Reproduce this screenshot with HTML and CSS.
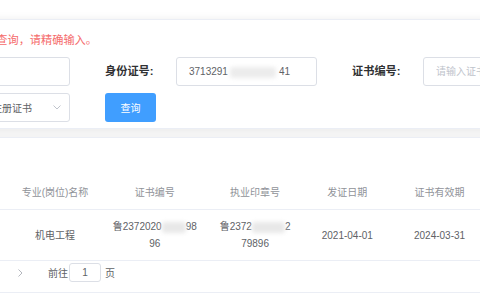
FILE: index.html
```html
<!DOCTYPE html>
<html lang="zh-CN">
<head>
    <meta charset="UTF-8">
    <meta name="viewport" content="width=device-width, initial-scale=1.0">
    <title>注册证书查询</title>
    <link rel="stylesheet" href="styles.css">
</head>
<body>

    <div class="page">
        <div class="card search-card">
            <p class="tip">温馨提示：系统仅支持精确查询，请精确输入。</p>

            <div class="form-row">
                <div class="field">
                    <label class="field-label" for="xm">姓名:</label>
                    <input class="field-input" type="text" id="xm" name="xm">
                </div>
                <div class="field">
                    <label class="field-label">身份证号:</label>
                    <div class="field-input fake-input">3713291<span class="masked masked-id"></span>41</div>
                </div>
                <div class="field">
                    <label class="field-label" for="zsbh">证书编号:</label>
                    <input class="field-input" type="text" id="zsbh" name="zsbh" placeholder="请输入证书编号">
                </div>
            </div>

            <div class="form-row">
                <div class="field">
                    <label class="field-label">证书类型:</label>
                    <div class="field-input select">
                        <span>一级建造师注册证书</span>
                        <svg class="select-arrow" width="8" height="5" viewBox="0 0 8 5">
                            <path d="M0.5 0.5 L4 4 L7.5 0.5" fill="none" stroke="#c0c4cc" stroke-width="1"/>
                        </svg>
                    </div>
                </div>
                <button class="btn-primary" type="button">查询</button>
            </div>
        </div>

        <div class="card result-card">
            <table class="result-table">
                <colgroup>
                    <col style="width: 60px">
                    <col style="width: 86px">
                    <col style="width: 101px">
                    <col style="width: 98px">
                    <col style="width: 102px">
                    <col style="width: 82px">
                    <col style="width: 102px">
                    <col style="width: 90px">
                </colgroup>
                <thead>
                    <tr>
                        <th>序号</th>
                        <th>姓名</th>
                        <th>专业(岗位)名称</th>
                        <th>证书编号</th>
                        <th>执业印章号</th>
                        <th>发证日期</th>
                        <th>证书有效期</th>
                        <th>状态</th>
                    </tr>
                </thead>
                <tbody>
                    <tr>
                        <td>1</td>
                        <td>张**</td>
                        <td>机电工程</td>
                        <td>鲁2372020<span class="masked masked-cert"></span>98<br>96</td>
                        <td>鲁2372<span class="masked masked-seal"></span>2<br>79896</td>
                        <td>2021-04-01</td>
                        <td>2024-03-31</td>
                        <td>有效</td>
                    </tr>
                </tbody>
            </table>

            <div class="pager">
                <div class="pager-left">
                    <span class="pager-total">共 1 条</span>
                    <span class="pager-btn">
                        <svg width="5" height="8" viewBox="0 0 5 8"><path d="M4.5 0.5 L1 4 L4.5 7.5" fill="none" stroke="#c0c4cc" stroke-width="1"/></svg>
                    </span>
                    <span class="pager-num">1</span>
                </div>
                <span class="pager-btn">
                    <svg width="5" height="8" viewBox="0 0 5 8"><path d="M0.5 0.5 L4 4 L0.5 7.5" fill="none" stroke="#b4b7be" stroke-width="1"/></svg>
                </span>
                <span class="pager-jump">前往<input class="pager-input" type="text" value="1">页</span>
            </div>
        </div>
    </div>

</body>
</html>
```

FILE: styles.css
```css
* {
    margin: 0;
    padding: 0;
    box-sizing: border-box;
}
html, body {
    overflow: hidden;
}
body {
    font-family: 'Liberation Sans', 'Noto Sans CJK SC', sans-serif;
    background-color: #fff;
    color: #606266;
}
.page {
    width: 760px;
    margin: 19px 0 0 -160px;
}
.card {
    background-color: #fff;
    border: 1px solid #ebeef5;
    box-shadow: 0 2px 10px rgba(0, 0, 0, 0.1);
}
.search-card {
    padding: 12px 17px 6px;
    margin-bottom: 8px;
}
.tip {
    padding-left: 4px;
    font-size: 11.2px;
    line-height: 16px;
    color: #f56c6c;
    margin-bottom: 9px;
}
.form-row {
    display: flex;
    align-items: center;
    margin-bottom: 7px;
}
.form-row:last-child {
    margin-bottom: 0;
}
.field {
    display: flex;
    align-items: center;
    margin-right: 35px;
}
.field-label {
    width: 71px;
    font-size: 11.2px;
    font-weight: bold;
    color: #303133;
    line-height: 29px;
}
.field-input {
    width: 141px;
    height: 29px;
    padding: 0 12px;
    font-family: inherit;
    font-size: 10px;
    color: #606266;
    background-color: #fff;
    border: 1px solid #dcdfe6;
    border-radius: 3px;
    outline: none;
}
.field-input::placeholder {
    color: #c0c4cc;
}
.fake-input {
    line-height: 27px;
    white-space: nowrap;
    overflow: hidden;
}
.select {
    display: flex;
    align-items: center;
    justify-content: space-between;
    padding-right: 8px;
    white-space: nowrap;
}
.select-arrow {
    display: block;
    flex-shrink: 0;
}
.masked {
    display: inline-block;
    height: 11px;
    vertical-align: middle;
    background-color: #e8e8e8;
    border-radius: 3px;
    filter: blur(2px);
}
.masked-id {
    width: 46px;
    margin: 0 3px 0 2px;
    background-color: #ececec;
}
.masked-cert {
    width: 24px;
}
.masked-seal {
    width: 33px;
}
.btn-primary {
    width: 51px;
    height: 29px;
    border: none;
    border-radius: 3px;
    background-color: #409eff;
    color: #fff;
    font-family: inherit;
    font-size: 10px;
    cursor: pointer;
}
.result-card {
    padding: 38px 17px 10px;
}
.result-table {
    table-layout: fixed;
    border-collapse: collapse;
    width: 723px;
}
.result-table th, .result-table td {
    padding: 8px 0;
    font-size: 10px;
    line-height: 17px;
    text-align: center;
    font-weight: normal;
    border-bottom: 1px solid #ebeef5;
}
.result-table th {
    color: #909399;
}
.result-table td {
    color: #606266;
}
.pager {
    display: flex;
    align-items: center;
    padding-top: 2px;
    font-size: 10px;
    color: #606266;
}
.pager-left {
    width: 150px;
    display: flex;
    align-items: center;
    justify-content: flex-end;
}
.pager-total {
    margin-right: 10px;
}
.pager-num {
    width: 24px;
    text-align: center;
    color: #409eff;
}
.pager-btn {
    width: 24px;
    height: 19px;
    display: flex;
    align-items: center;
    justify-content: center;
}
.pager-jump {
    display: flex;
    align-items: center;
    margin-left: 16px;
}
.pager-input {
    width: 32px;
    height: 19px;
    margin: 0 4px 0 1px;
    font-family: inherit;
    font-size: 10px;
    color: #606266;
    text-align: center;
    border: 1px solid #dcdfe6;
    border-radius: 3px;
    outline: none;
}
```
